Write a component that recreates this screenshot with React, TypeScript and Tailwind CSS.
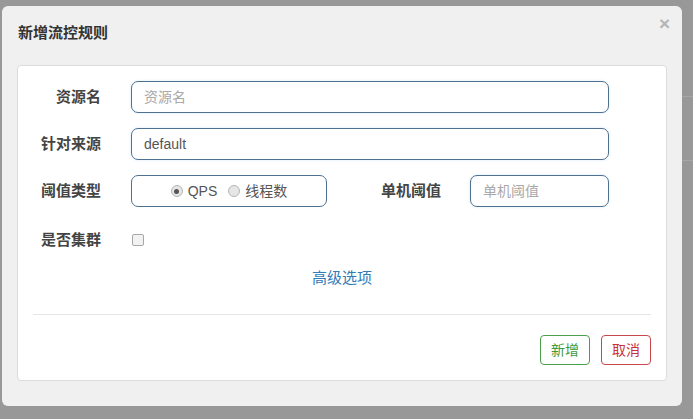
import React from "react";

const font = { fontFamily: '"Liberation Sans", "Noto Sans CJK SC", sans-serif' };

function Radio({ checked }: { checked?: boolean }) {
  return (
    <span className="flex h-[12px] w-[12px] items-center justify-center rounded-full border border-[#b5b5b5] bg-[#e6e6e6]">
      {checked && <span className="h-[5px] w-[5px] rounded-full bg-[#555]" />}
    </span>
  );
}

function Label({ children, className = "" }: { children: React.ReactNode; className?: string }) {
  return (
    <label className={`shrink-0 text-right text-[15px] font-bold text-[#444] ${className}`}>{children}</label>
  );
}

const inputCls =
  "h-[32px] rounded-[7px] border border-[#4f7191] bg-white px-[12px] text-[14px] text-[#555] shadow-[0_0_3px_rgba(102,175,233,0.25)] outline-none placeholder:text-[#a9a9a9]";

export default function App() {
  return (
    <div className="relative h-[419px] w-[693px] overflow-hidden bg-[#989898] pl-[2px] pt-[6px]" style={font}>
      {/* page behind the backdrop */}
      <div className="absolute right-0 top-[96px] h-[1px] w-[11px] bg-[#a6a6a6]" />
      <div className="absolute right-0 top-[160px] h-[1px] w-[11px] bg-[#a6a6a6]" />

      <div className="flex h-[400px] w-[680px] flex-col rounded-[6px] bg-[#f0f0f0]">
        <div className="relative flex h-[59px] items-center px-[16px] pb-[5px]">
          <h4 className="text-[15px] font-bold text-[#333]">新增流控规则</h4>
          <span className="absolute right-[12px] top-[8px] text-[19px] font-bold leading-none text-[#b5b5b5]">×</span>
        </div>

        <div className="mx-[15px] flex h-[316px] flex-col rounded-[4px] border border-[#dcdcdc] bg-white pt-[15px]">
          <div className="flex h-[32px] items-center">
            <Label className="w-[83px]">资源名</Label>
            <input className={`${inputCls} ml-[30px] w-[478px]`} placeholder="资源名" />
          </div>

          <div className="mt-[15px] flex h-[32px] items-center">
            <Label className="w-[83px]">针对来源</Label>
            <input className={`${inputCls} ml-[30px] w-[478px]`} defaultValue="default" />
          </div>

          <div className="mt-[15px] flex h-[32px] items-center">
            <Label className="w-[83px]">阈值类型</Label>
            <div className="ml-[30px] flex h-[32px] w-[196px] items-center justify-center gap-[5px] rounded-[7px] border border-[#4f7191] text-[14px] text-[#555]">
              <Radio checked />
              <span className="mr-[6px]">QPS</span>
              <Radio />
              <span>线程数</span>
            </div>
            <Label className="ml-[52px] w-[62px]">单机阈值</Label>
            <input className={`${inputCls} ml-[29px] w-[139px]`} placeholder="单机阈值" />
          </div>

          <div className="mt-[17px] flex h-[32px] items-center">
            <Label className="w-[83px]">是否集群</Label>
            <span className="ml-[31px] h-[12px] w-[12px] rounded-[2px] border border-[#a8a8a8] bg-[#f2f2f2]" />
          </div>

          <div className="mt-[12px] flex h-[20px] items-center justify-center">
            <a className="text-[15px] text-[#337ab7]">高级选项</a>
          </div>

          <div className="mx-[15px] mt-[26px] h-[1px] bg-[#e5e5e5]" />

          <div className="mr-[15px] mt-[20px] flex justify-end gap-[11px]">
            <button className="h-[30px] w-[50px] rounded-[4px] border border-[#4aa04a] bg-white text-[14px] text-[#3c9a3c]">
              新增
            </button>
            <button className="h-[30px] w-[50px] rounded-[4px] border border-[#c9474c] bg-white text-[14px] text-[#c9303a]">
              取消
            </button>
          </div>
        </div>
      </div>
    </div>
  );
}
